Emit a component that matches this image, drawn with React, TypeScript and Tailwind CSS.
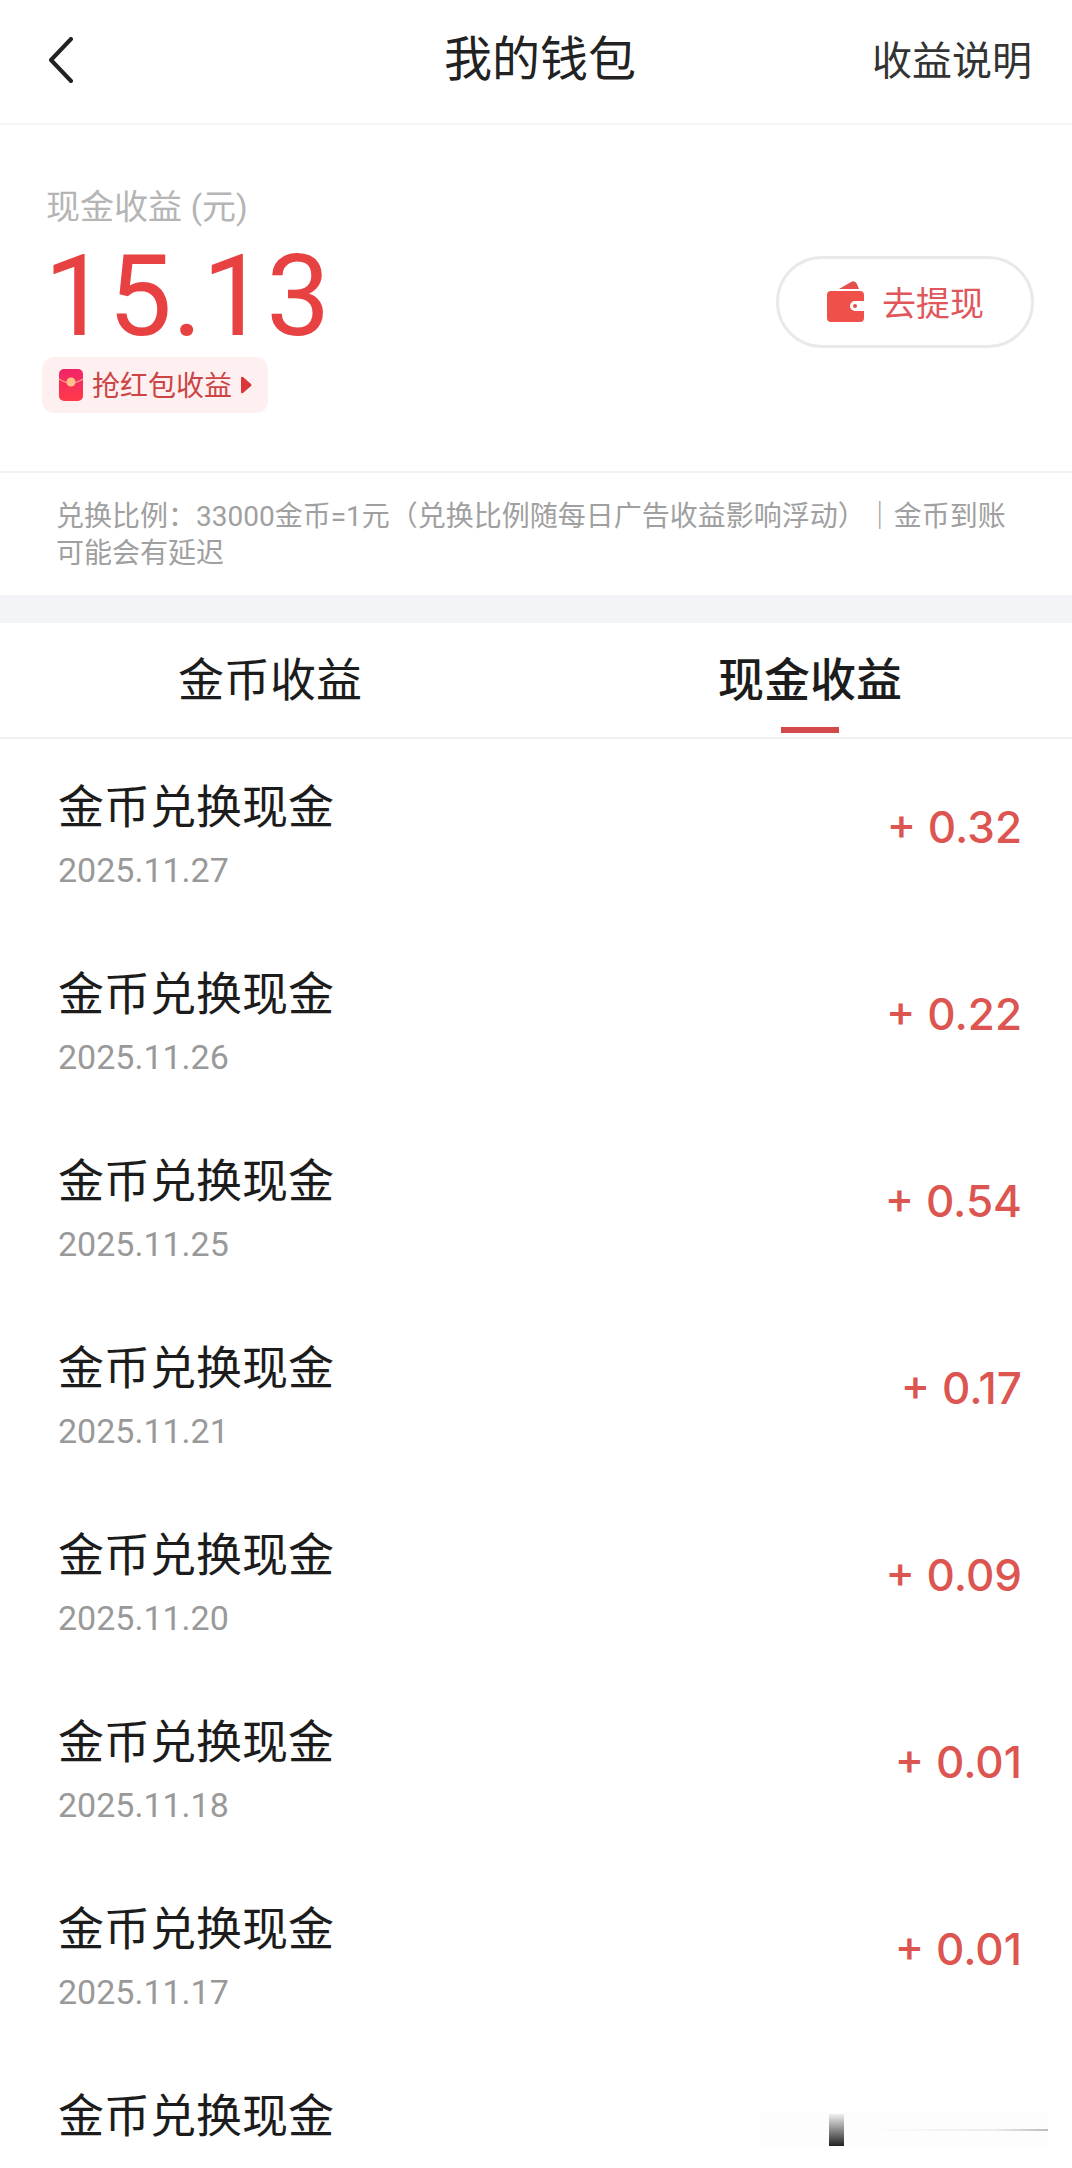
import { useState } from "react"

type Entry = {
  title: string
  date?: string
  amount?: string
}

const entries: Entry[] = [
  { title: "金币兑换现金", date: "2025.11.27", amount: "0.32" },
  { title: "金币兑换现金", date: "2025.11.26", amount: "0.22" },
  { title: "金币兑换现金", date: "2025.11.25", amount: "0.54" },
  { title: "金币兑换现金", date: "2025.11.21", amount: "0.17" },
  { title: "金币兑换现金", date: "2025.11.20", amount: "0.09" },
  { title: "金币兑换现金", date: "2025.11.18", amount: "0.01" },
  { title: "金币兑换现金", date: "2025.11.17", amount: "0.01" },
  { title: "金币兑换现金" },
]

const tabs = [
  { id: "coin", label: "金币收益" },
  { id: "cash", label: "现金收益" },
]

function BackIcon() {
  return (
    <svg width="26" height="46" viewBox="0 0 26 46" fill="none" aria-hidden="true">
      <path d="M23 2 3 23l20 21" stroke="#222" strokeWidth="4" strokeLinecap="round" strokeLinejoin="round" />
    </svg>
  )
}

function WalletIcon() {
  return (
    <svg width="40" height="42" viewBox="0 0 40 42" aria-hidden="true">
      <path d="M13 8 25 1q4-2 6 2l2 5z" fill="#e4514c" />
      <path
        d="M5 10h29q4 0 4 4v6H29a5 5 0 0 0 0 10h9v7q0 4-4 4H5q-4 0-4-4V14q0-4 4-4z"
        fill="#f0504a"
      />
      <circle cx="29" cy="25" r="2" fill="#e4514c" />
    </svg>
  )
}

function RedPacketIcon() {
  return (
    <svg width="26" height="34" viewBox="0 0 26 34" aria-hidden="true">
      <defs>
        <linearGradient id="packet" x1="0" y1="0" x2="0" y2="1">
          <stop offset="0" stopColor="#f0246a" />
          <stop offset="1" stopColor="#ff3a48" />
        </linearGradient>
      </defs>
      <rect x="1" y="1" width="24" height="32" rx="5" fill="url(#packet)" />
      <path d="M1 11q12 8 24 0" fill="none" stroke="#ff9f8c" strokeWidth="1.5" />
      <circle cx="13" cy="14" r="4.5" fill="#ffc08a" />
    </svg>
  )
}

function Header() {
  return (
    <header className="grid grid-cols-3 items-center h-[125px] pl-12 pr-10 pb-1 border-b-2 border-[#f5f5f5]">
      <button type="button" aria-label="返回" className="justify-self-start">
        <BackIcon />
      </button>
      <div className="col-span-2 grid grid-cols-2 items-end">
        <h1 className="text-center text-5xl leading-[64px] text-[#222]">我的钱包</h1>
        <a href="#rules" className="justify-self-end text-[40px] leading-[60px] text-[#333]">
          收益说明
        </a>
      </div>
    </header>
  )
}

function Balance() {
  return (
    <section className="flex items-center justify-between h-[348px] pt-2 pl-[46px] pr-[38px] border-b-2 border-[#f3f3f3]">
      <div className="flex flex-col items-start pb-2">
        <h2 className="text-[34px] leading-[48px] text-[#b5b5b5]">现金收益 (元)</h2>
        <p className="mt-1 -ml-0.5 text-[114px] leading-[122px] text-[#e84142]">15.13</p>
        <a
          href="#red-packet"
          className="flex items-center h-14 -ml-1 px-4 rounded-xl bg-[#fef0f0] text-[28px] leading-[40px] text-[#cc4444]"
        >
          <RedPacketIcon />
          <span className="ml-2 pt-1">抢红包收益</span>
          <svg className="ml-2" width="12" height="18" viewBox="0 0 12 18" aria-hidden="true">
            <path d="M1 2v14q0 2 2 1l8-7q1-1 0-2L3 1Q1 0 1 2z" fill="#d9363a" />
          </svg>
        </a>
      </div>
      <button
        type="button"
        className="flex items-center justify-center gap-4 w-[258px] h-[92px] rounded-full border-3 border-[#e9e9e9] text-[34px] leading-[44px] text-[#e0565a]"
      >
        <WalletIcon />
        <span className="pt-1">去提现</span>
      </button>
    </section>
  )
}

export default function App() {
  const [activeTab, setActiveTab] = useState("cash")

  return (
    <div className="relative h-screen overflow-hidden bg-white font-['Roboto','Noto_Sans_CJK_SC',sans-serif]" lang="zh-CN">
      <Header />
      <Balance />

      <p className="px-14 pt-[25px] pb-[23px] text-[28px] leading-[37px] text-[#a0a0a0]">
        兑换比例：33000金币=1元（兑换比例随每日广告收益影响浮动）｜金币到账可能会有延迟
      </p>
      <div className="h-7 bg-[#f2f4f7]" />

      {/* Tabs */}
      <div role="tablist" className="grid grid-cols-2 h-[116px] -mr-2 border-b-2 border-[#f0f0f0]">
        {tabs.map((tab) => {
          const active = tab.id === activeTab
          return (
            <button
              key={tab.id}
              type="button"
              role="tab"
              aria-selected={active}
              onClick={() => setActiveTab(tab.id)}
              className={
                active
                  ? "flex flex-col items-center justify-between pt-[27px] pb-1 text-[46px] leading-[60px] text-[#1c1c1c] font-medium"
                  : "flex flex-col items-center justify-between pt-[27px] pb-1 text-[46px] leading-[60px] text-[#1c1c1c]"
              }
            >
              {tab.label}
              {active && <span className="w-[58px] h-1.5 bg-[#d34a4a]" />}
            </button>
          )
        })}
      </div>

      {/* Records */}
      <ul className="pt-[38px] pl-[58px] pr-[50px]">
        {entries.map((entry, i) => (
          <li key={i} className="flex justify-between h-[187px]">
            <div>
              <h3 className="text-[46px] leading-[60px] text-[#1c1c1c]">{entry.title}</h3>
              {entry.date && (
                <time className="block mt-[11px] text-[34px] leading-[44px] text-[#999]">{entry.date}</time>
              )}
            </div>
            {entry.amount && (
              <p className="pt-5 font-['Inter',sans-serif] font-medium text-[44px] leading-[60px] text-[#dc5550]">
                + {entry.amount}
              </p>
            )}
          </li>
        ))}
      </ul>

      {/* Faded strip in the bottom corner */}
      <svg
        className="absolute right-6 bottom-[18px]"
        width="288"
        height="38"
        viewBox="0 0 288 38"
        aria-hidden="true"
      >
        <defs>
          <linearGradient id="bar" x1="0" y1="0" x2="0" y2="1">
            <stop offset="0" stopColor="#f0f0f0" />
            <stop offset="0.5" stopColor="#8a8a8a" />
            <stop offset="1" stopColor="#222" />
          </linearGradient>
          <linearGradient id="trail" x1="0" y1="0" x2="1" y2="0">
            <stop offset="0" stopColor="#fdfdfd" />
            <stop offset="0.7" stopColor="#ececec" />
            <stop offset="1" stopColor="#bbb" />
          </linearGradient>
        </defs>
        <rect width="288" height="34" fill="#fdfdfd" />
        <rect x="69" y="2" width="15" height="32" fill="url(#bar)" />
        <rect x="110" y="17" width="178" height="2" fill="url(#trail)" />
      </svg>
    </div>
  )
}
